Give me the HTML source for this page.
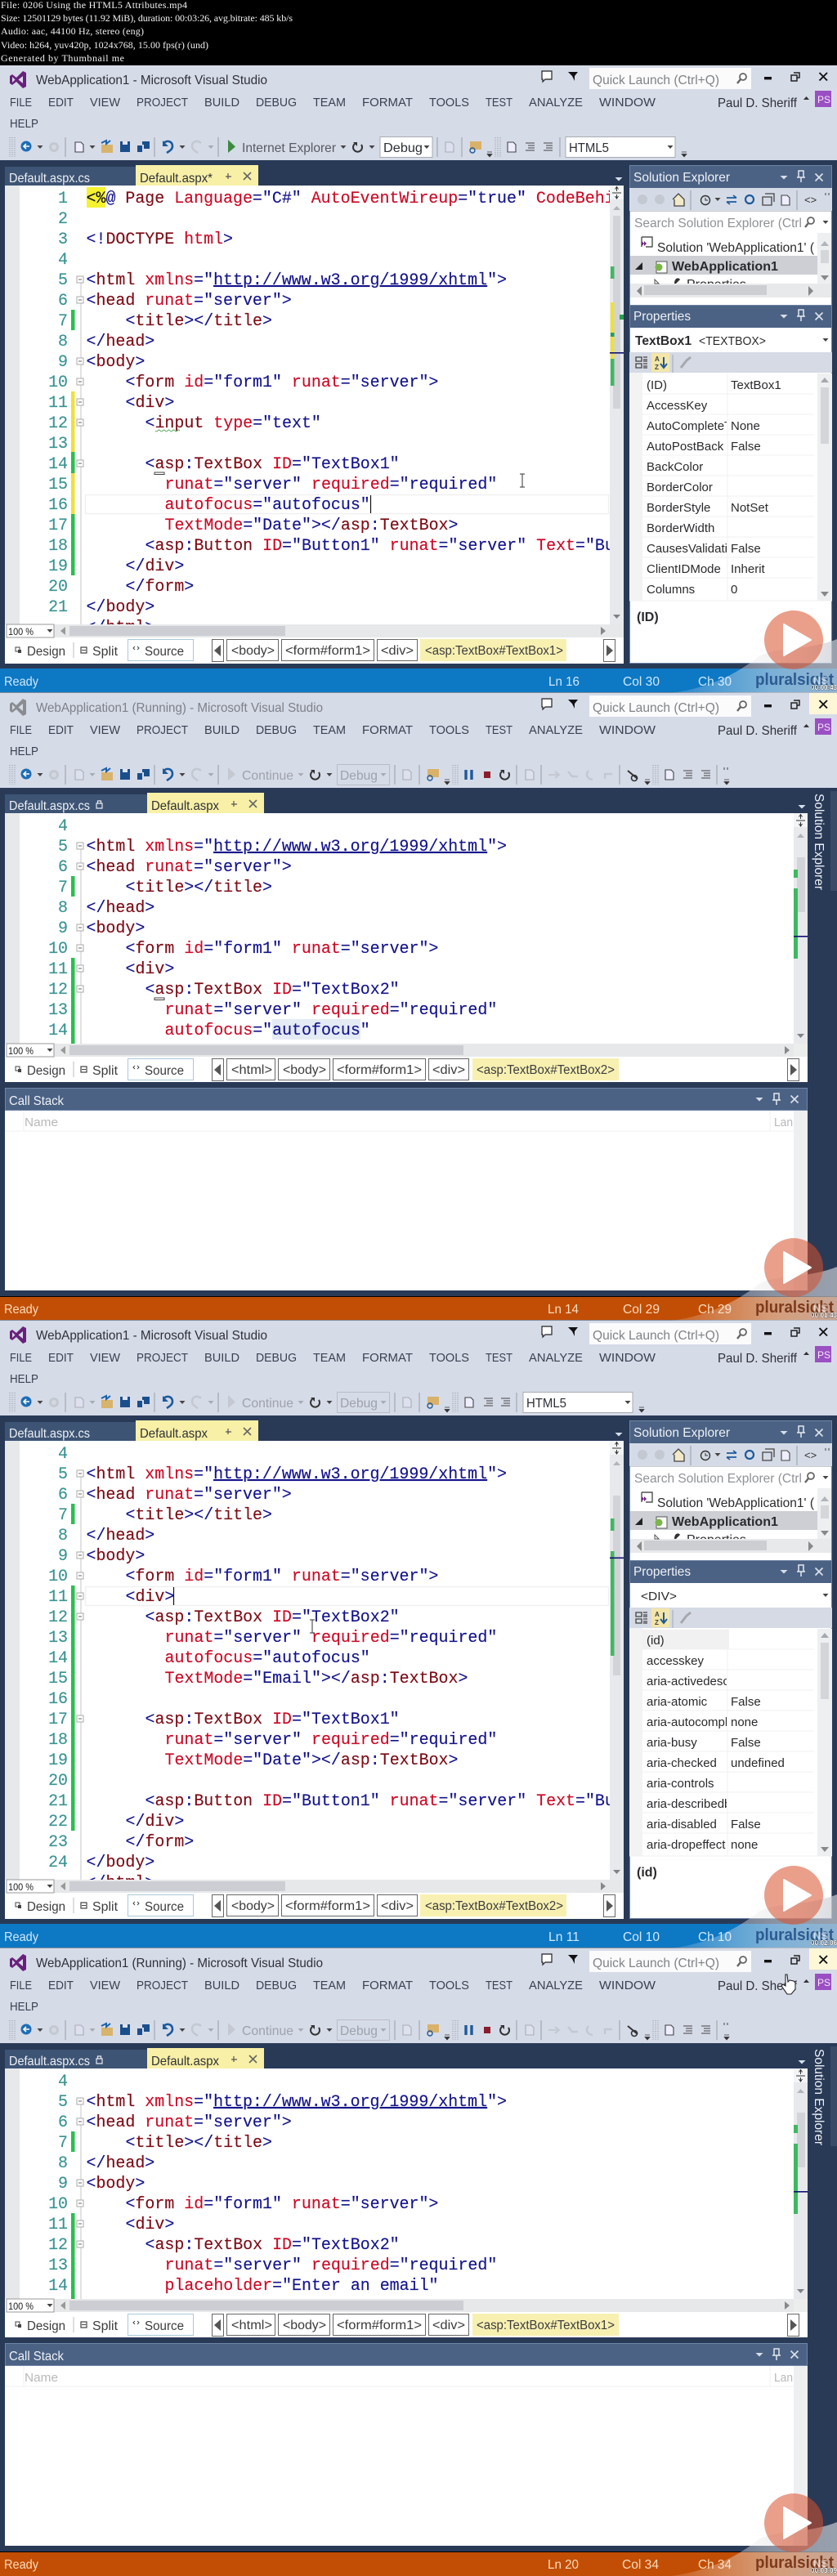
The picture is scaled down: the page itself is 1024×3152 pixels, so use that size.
<!DOCTYPE html>
<html><head><meta charset="utf-8"><title>0206 Using the HTML5 Attributes</title>
<style>
html,body{margin:0;padding:0;background:#000}
svg{display:block;filter:blur(.3px)}
text{white-space:pre;font-family:"Liberation Sans",sans-serif}
.h{font-family:"Liberation Serif",serif;font-size:12px;fill:#f2f2f2}
.c{font-family:"Liberation Mono",monospace;font-size:19.95px;fill:#14148c;stroke:#14148c;stroke-width:.15}
.m{fill:#7d0c16;stroke:#7d0c16}.r{fill:#cc0a26;stroke:#cc0a26}.u{text-decoration:underline}.k{fill:#111;stroke:#111}
.n{font-family:"Liberation Mono",monospace;font-size:19.95px;fill:#3a9492;text-anchor:end;stroke:#3a9492;stroke-width:.15}
.t{font-size:16px;fill:#2e3038}.ti{font-size:16px;fill:#7d8088}
.mn{font-size:15px;fill:#3a4150}
.g{font-size:16px;fill:#9da2ab}.d{font-size:16px;fill:#565a62}
.w{font-size:16px;fill:#eef1f6}
.p{font-size:15px;fill:#2a2a2e}
.b{font-size:15.5px;fill:#3c3c40}
.st{font-size:16px}
.ps{font-size:12px;fill:#f4e6fa}
.pl{font-size:20px;font-weight:700}
.z{font-size:12px;fill:#222}
.ns{font-size:13px;font-weight:700;fill:#fff;opacity:.55}
.ts{font-size:8px;font-weight:700;fill:#fff;stroke:#000;stroke-width:.5;paint-order:stroke}
</style></head><body>
<svg xmlns="http://www.w3.org/2000/svg" width="1024" height="3152" viewBox="0 0 1024 3152">
<defs>
<clipPath id="ec1"><rect x="100" y="147" width="646" height="537"/></clipPath>
<clipPath id="ec2"><rect x="100" y="147" width="871" height="282"/></clipPath>
<clipPath id="nm"><rect x="786" y="380" width="103" height="300"/></clipPath>
<clipPath id="sl"><rect x="770" y="204" width="230" height="63"/></clipPath>
<linearGradient id="sw" x1="0" y1="0" x2="1" y2="0"><stop offset="0" stop-color="#fff" stop-opacity=".1"/><stop offset=".6" stop-color="#e8e8ea" stop-opacity=".5"/><stop offset="1" stop-color="#c8ccd4" stop-opacity=".7"/></linearGradient>
<path id="cr" d="M-3.5-2H3.5L0 2Z" fill="#444"/>
<path id="crg" d="M-3.5-2H3.5L0 2Z" fill="#a7abb3"/>
<path id="crw" d="M-4.5-2H4.5L0 2.5Z" fill="#d6deea"/>
<g id="sp"><path d="M0 0V24" stroke="#a2a7b1" stroke-width="1.2"/></g>
<g id="fb"><rect x="94" y="-4" width="8" height="8" fill="#fff" stroke="#aaa"/><path d="M96 0H100" stroke="#666"/></g>
<g id="doc"><path d="M-5-6H2L5-3V6H-5Z" fill="#eef" stroke="#444" stroke-width="1.1"/></g>
<g id="lns"><path d="M-5-5H6M-2-2H6M-2 1H6M-5 4H6" stroke="#444" stroke-width="1.1"/></g>
<g id="gr"><path d="M0 0V24M3 0V24M6 0V24" stroke="#8c919b" stroke-dasharray="1 1.6"/></g>
<g id="dd"><path d="M-3-1H3M-3 1.5H3L0 5Z" fill="#333" stroke="#333" stroke-width=".7"/></g>
<g id="chrome">
<path d="M663 7H675V17H667L664 20V17H663Z" fill="#fff" stroke="#222" stroke-width="1.2"/>
<path d="M695 8H707L703 13V19L700 13Z" fill="#111"/>
<rect x="721" y="3" width="198" height="26" fill="#fbfbfc"/>
<circle cx="909" cy="14" r="4" fill="none" stroke="#666" stroke-width="1.8"/><path d="M906 17L902 22" stroke="#666" stroke-width="2.4"/>
<rect x="935" y="14" width="9" height="3.4" fill="#111"/>
<path d="M971 9H978V15H975M968 12H975V19H968Z" fill="none" stroke="#222" stroke-width="1.5"/>
<path d="M1002.5 9L1012 18.5M1012 9L1002.5 18.5" stroke="#111" stroke-width="1.9"/>
<path d="M983 42H990L986.5 38Z" fill="#333"/>
<rect x="997" y="31" width="20" height="20" fill="#9a4fc2"/>
</g>
<g id="tbl">
<g transform="translate(12,88)"><use href="#gr"/></g>
<circle cx="32" cy="99" r="6.5" fill="#1d6db4"/><path d="M36 99H29M32 96L29 99L32 102" stroke="#fff" stroke-width="1.6" fill="none"/>
<use href="#cr" x="49" y="100"/><circle cx="66" cy="100" r="6" fill="#c3c8d1"/><circle cx="66" cy="100" r="3" fill="#d4d8e0"/>
<use href="#sp" x="80" y="88"/>
<rect x="124" y="97" width="14" height="10" fill="#d8b36c"/><path d="M124 95L130 92V96L135 92" stroke="#1d62a8" stroke-width="2" fill="none"/>
<path d="M147 93H159V106H147Z" fill="#1b4f8c"/><rect x="150" y="93" width="6" height="4" fill="#dfe4ee"/>
<path d="M168 98H174V106H168ZM174 93H183V102H176V97H174Z" fill="#1b4f8c"/>
<use href="#sp" x="189" y="88"/>
<path d="M200 95C205 91 211 93 211 99C211 103 207 105 204 107" fill="none" stroke="#1b5a9c" stroke-width="2.6"/><path d="M199 92V99H206Z" fill="#1b5a9c"/>
<use href="#cr" x="223" y="100"/>
<path d="M246 95C241 91 235 93 235 99C235 103 239 105 242 107" fill="none" stroke="#c3c8d1" stroke-width="2.6"/>
<use href="#crg" x="258" y="100"/><use href="#sp" x="267" y="88"/>
</g>
<g id="ref"><path d="M-4-4A5.5 5.5 0 1 0 4-3" fill="none" stroke="#333" stroke-width="2"/><path d="M-6-6H-1V-1Z" fill="#333"/></g>
<g id="pin"><path d="M-3-7H3V1H-3ZM-5 1H5M0 1V7" fill="none" stroke="#e4e8f0" stroke-width="1.5"/></g>
<g id="xw"><path d="M-4.5-4.5L4.5 4.5M4.5-4.5L-4.5 4.5" stroke="#dde3ec" stroke-width="1.6"/></g>
<g id="setb">
<rect x="770" y="150" width="248" height="28" fill="#d5dbe6"/>
<circle cx="786" cy="164" r="6" fill="#c3c8d1"/><circle cx="807" cy="164" r="6" fill="#c3c8d1"/>
<path d="M823 164L830 157L837 164V172H825V164" fill="#f2e9c8" stroke="#444" stroke-width="1.3"/>
<use href="#sp" x="845" y="153" transform="translate(0,0)"/>
<circle cx="863" cy="165" r="5.5" fill="none" stroke="#333" stroke-width="1.4"/><path d="M863 162V165H866" stroke="#333" fill="none"/><use href="#cr" x="878" y="164"/>
<path d="M889 162H901M897 159L901 162M889 167H901M893 170L889 167" stroke="#1f5a9a" stroke-width="1.7" fill="none"/>
<circle cx="917" cy="164" r="5" fill="none" stroke="#1f5a9a" stroke-width="2.2"/>
<path d="M933 161H944V171H933ZM936 157H947V167" fill="none" stroke="#444" stroke-width="1.3"/>
<use href="#doc" x="961" y="165"/><use href="#sp" x="975" y="153"/>
<text x="984" y="169" font-size="13" fill="#333">&lt;&gt;</text>
<path d="M1010 156V159M1014 156V159" stroke="#444"/>
</g>
<g id="prtb">
<rect x="770" y="351" width="248" height="25" fill="#d5dae4"/>
<path d="M778 357H785V362H778ZM778 365H785V370H778ZM787 357H792M787 360H792M787 362H792M787 365H792M787 368H792M787 370H792" fill="none" stroke="#444" stroke-width="1.3"/>
<rect x="797" y="352" width="22" height="23" fill="#f3e6a8"/>
<text x="801" y="362" font-size="8" font-weight="700" fill="#444">A</text><text x="801" y="372" font-size="8" font-weight="700" fill="#444">Z</text>
<path d="M812 357V369M808 365L812 370L816 365" fill="none" stroke="#1f5a9a" stroke-width="2"/>
<path d="M823 354V376" stroke="#a2a7b1"/>
<path d="M833 370L840 361L845 357" stroke="#a5a8ad" stroke-width="3"/>
</g>
<g id="dtab">
<rect x="19" y="712" width="5" height="5" fill="none" stroke="#444"/><rect x="22" y="715" width="4" height="4" fill="#444"/>
<path d="M90 706V725" stroke="#b8bcc4"/>
<rect x="99" y="712" width="7" height="7" fill="none" stroke="#444" stroke-width="1.2"/><path d="M100 715.5H105" stroke="#444"/>
<rect x="156.5" y="702.5" width="80" height="26" fill="#fff" stroke="#a9c9d8"/>
<path d="M165 711L163 713L165 715M168 711L170 713L168 715" stroke="#444" fill="none"/>
<rect x="259.5" y="702.5" width="14" height="27" fill="#fff" stroke="#666"/><path d="M270 709V723L262 716Z" fill="#555"/>
</g>
<g id="sb1">
<rect x="746" y="147" width="17" height="537" fill="#e8e9ec"/>
<rect x="746" y="147" width="17" height="17" fill="#f3f4f6"/>
<path d="M749 156H760M754.5 149V154M752.5 151.5L754.5 148.5L756.5 151.5M754.5 158V163M752.5 160L754.5 163L756.5 160" stroke="#333" stroke-width="1" fill="none"/>
<path d="M750 177H759L754.5 172Z" fill="#b1b4ba"/><path d="M750 672H759L754.5 677Z" fill="#7f8288"/>
</g>
<g id="sb2">
<rect x="971" y="147" width="17" height="282" fill="#e8e9ec"/>
<rect x="971" y="147" width="17" height="17" fill="#f3f4f6"/>
<path d="M974 156H985M979.5 149V154M977.5 151.5L979.5 148.5L981.5 151.5M979.5 158V163M977.5 160L979.5 163L981.5 160" stroke="#333" stroke-width="1" fill="none"/>
<path d="M975 177H984L979.5 172Z" fill="#b1b4ba"/><path d="M975 417H984L979.5 422Z" fill="#7f8288"/>
<rect x="975" y="201" width="10" height="67" fill="#d2d4d9"/>
<rect x="971" y="216" width="5" height="10" fill="#3fb862"/><rect x="971" y="239" width="5" height="86" fill="#3fb862"/><rect x="971" y="297" width="17" height="1.6" fill="#101070"/>
</g>
<g id="dk2">
<rect x="0" y="116" width="1024" height="622" fill="#293a57"/>
<rect x="6" y="147" width="982" height="329" fill="#fff"/>
<rect x="6" y="147" width="18" height="282" fill="#e7e8ea"/>
<rect x="66" y="429" width="905" height="16" fill="#e7e8ea"/><rect x="85" y="431" width="482" height="12" fill="#cdced3"/>
<path d="M80 432V442L74 437Z" fill="#999"/><path d="M960 432V442L966 437Z" fill="#888"/>
<rect x="971" y="429" width="17" height="16" fill="#eceded"/>
<rect x="8" y="429" width="58" height="16" fill="#fff" stroke="#999"/>
<use href="#cr" x="61" y="437"/>
<rect x="6" y="483" width="982" height="28" fill="#4b6284"/><rect x="6.5" y="483.5" width="981" height="27" fill="none" stroke="#6f85a6"/>
<rect x="6" y="511" width="982" height="220" fill="#fff"/>
<rect x="971" y="511" width="17" height="220" fill="#eeeff1"/>
<path d="M6 536H971" stroke="#f0f0f1"/><path d="M29 511V536M942 511V536" stroke="#f1f1f2"/>
<use href="#crw" x="929" y="497"/><use href="#pin" x="950" y="497"/><use href="#xw" x="972" y="497"/>
<rect x="1016" y="120" width="8" height="122" fill="#3a4b68"/>
<use href="#crw" x="981" y="139"/>
</g>
<g id="dk1">
<rect x="0" y="116" width="1024" height="622" fill="#293a57"/>
<rect x="6" y="147" width="757" height="585" fill="#fff"/>
<rect x="6" y="147" width="18" height="537" fill="#e7e8ea"/>
<rect x="66" y="684" width="697" height="16" fill="#e7e8ea"/><rect x="85" y="686" width="264" height="12" fill="#cdced3"/>
<path d="M80 687V697L74 692Z" fill="#999"/><path d="M735 687V697L741 692Z" fill="#888"/>
<rect x="8" y="684" width="58" height="16" fill="#fff" stroke="#999"/><use href="#cr" x="61" y="692"/>
<use href="#crw" x="757" y="139"/>
<use href="#sb1"/>
<rect x="770" y="122" width="248" height="243" fill="#fff"/><rect x="770" y="122" width="248" height="28" fill="#4b6284"/><rect x="770.5" y="122.5" width="247" height="242" fill="none" stroke="#6f85a6"/>
<use href="#setb"/>
<rect x="771" y="178" width="246" height="1" fill="#ccc"/>
<use href="#crw" x="959" y="137"/><use href="#pin" x="980" y="136"/><use href="#xw" x="1002" y="137"/>
<circle cx="992" cy="190" r="4" fill="none" stroke="#666" stroke-width="1.8"/><path d="M989 193L985 198" stroke="#666" stroke-width="2.4"/><use href="#cr" x="1010" y="192"/>
<rect x="771" y="233" width="229" height="23" fill="#cdcfd4"/>
<rect x="1000" y="205" width="17" height="62" fill="#eeeff1"/><path d="M1004 221H1014L1009 215Z" fill="#b1b4ba"/><rect x="1004" y="226" width="10" height="16" fill="#d4d6da"/><path d="M1004 257H1014L1009 263Z" fill="#888"/>
<rect x="771" y="267" width="246" height="17" fill="#e8e9eb"/><rect x="788" y="269" width="150" height="12" fill="#cdced2"/><path d="M785 270V282L779 276Z" fill="#888"/><path d="M989 270V282L995 276Z" fill="#888"/>
<path d="M785 210H798V222H790M785 210V222" fill="none" stroke="#333" stroke-width="1.2"/><path d="M785 215L788 218L785 221ZM788 215L791 218L788 221" fill="#68217a"/>
<path d="M782 245L786 241V250H777Z" fill="#222"/>
<path d="M803 240H816V254H803Z" fill="#fff" stroke="#555"/><circle cx="806" cy="247" r="4.5" fill="#7bb648"/>
<path d="M801 262L806 267H801Z" fill="none" stroke="#555"/><path d="M825 267C825 260 830 259 832 262L827 267Z" fill="#333"/>
<rect x="770" y="293" width="248" height="439" fill="#fff"/><rect x="770" y="293" width="248" height="28" fill="#4b6284"/><rect x="770.5" y="293.5" width="247" height="438" fill="none" stroke="#6f85a6"/>
<use href="#prtb"/>
<use href="#crw" x="959" y="307"/><use href="#pin" x="980" y="306"/><use href="#xw" x="1002" y="307"/>
<use href="#cr" x="1010" y="336"/>
<rect x="770" y="376" width="16" height="279" fill="#f3f3f4"/>
<path d="M890 377V655" stroke="#f1f1f2"/>
<path d="M786 402H996M786 427H996M786 452H996M786 477H996M786 502H996M786 527H996M786 552H996M786 577H996M786 602H996M786 627H996M770 655H1018" stroke="#f1f1f2"/>
<rect x="1000" y="377" width="18" height="278" fill="#eeeff1"/><path d="M1004 388H1014L1009 382Z" fill="#a5a8ad"/><rect x="1004" y="394" width="10" height="69" fill="#d3d5d9"/><path d="M1004 644H1014L1009 650Z" fill="#888"/>
</g>
<path id="swp" d="M820 768C870 762 905 742 930 722C950 712 990 716 1024 702V768Z" fill="url(#sw)"/>
<g id="vs"><path fill-rule="evenodd" d="M12 13L15 11L20 15L28 7L32 9V26L28 28L20 20L15 24L12 22ZM15 14V21L18.5 17.5ZM22.5 17.5L28 22V13Z"/></g>
</defs>

<rect width="1024" height="80" fill="#000"/>
<text class="h" x="1" y="10" textLength="228" lengthAdjust="spacing">File: 0206 Using the HTML5 Attributes.mp4</text>
<text class="h" x="1" y="26" textLength="357" lengthAdjust="spacing">Size: 12501129 bytes (11.92 MiB), duration: 00:03:26, avg.bitrate: 485 kb/s</text>
<text class="h" x="1" y="42" textLength="175" lengthAdjust="spacing">Audio: aac, 44100 Hz, stereo (eng)</text>
<text class="h" x="1" y="59" textLength="254" lengthAdjust="spacing">Video: h264, yuv420p, 1024x768, 15.00 fps(r) (und)</text>
<text class="h" x="1" y="75" textLength="151" lengthAdjust="spacing">Generated by Thumbnail me</text>

<!-- FRAME 1 -->
<g transform="translate(0,80)">
<rect width="1024" height="116" fill="#d6dbe8"/>
<use href="#vs" fill="#68217a"/><use href="#chrome"/>
<text class="t" x="44" y="23" textLength="283" lengthAdjust="spacingAndGlyphs">WebApplication1 - Microsoft Visual Studio</text>
<text class="g" x="725" y="23" textLength="155" lengthAdjust="spacingAndGlyphs" style="fill:#808388">Quick Launch (Ctrl+Q)</text>
<text class="ps" x="1000" y="46">PS</text>
<text class="mn" x="12" y="50" textLength="27" lengthAdjust="spacingAndGlyphs">FILE</text><text class="mn" x="59" y="50" textLength="31" lengthAdjust="spacingAndGlyphs">EDIT</text><text class="mn" x="110" y="50" textLength="37" lengthAdjust="spacingAndGlyphs">VIEW</text><text class="mn" x="167" y="50" textLength="63" lengthAdjust="spacingAndGlyphs">PROJECT</text><text class="mn" x="250" y="50" textLength="43" lengthAdjust="spacingAndGlyphs">BUILD</text><text class="mn" x="313" y="50" textLength="50" lengthAdjust="spacingAndGlyphs">DEBUG</text><text class="mn" x="383" y="50" textLength="40" lengthAdjust="spacingAndGlyphs">TEAM</text><text class="mn" x="443" y="50" textLength="62" lengthAdjust="spacingAndGlyphs">FORMAT</text><text class="mn" x="525" y="50" textLength="49" lengthAdjust="spacingAndGlyphs">TOOLS</text><text class="mn" x="594" y="50" textLength="33" lengthAdjust="spacingAndGlyphs">TEST</text><text class="mn" x="647" y="50" textLength="66" lengthAdjust="spacingAndGlyphs">ANALYZE</text><text class="mn" x="733" y="50" textLength="69" lengthAdjust="spacingAndGlyphs">WINDOW</text>
<text class="mn" x="878" y="51" textLength="97" lengthAdjust="spacingAndGlyphs" style="fill:#2e3038;font-size:16px">Paul D. Sheriff</text>
<text class="mn" x="12" y="76" textLength="35" lengthAdjust="spacingAndGlyphs">HELP</text>
<use href="#tbl"/>
<use href="#doc" x="97" y="100"/><use href="#cr" x="113" y="100"/>
<path d="M279 91L288 99.5L279 107Z" fill="#3b8a3e"/>
<text class="d" x="296" y="106" textLength="115" lengthAdjust="spacingAndGlyphs">Internet Explorer</text>
<use href="#cr" x="420" y="100"/><use href="#ref" x="438" y="100"/><use href="#cr" x="455" y="100"/>
<rect x="465" y="87.5" width="64" height="25" fill="#fff" stroke="#a8abb2"/><text class="t" x="469" y="106" textLength="48" lengthAdjust="spacingAndGlyphs">Debug</text><use href="#cr" x="522" y="100"/>
<use href="#sp" x="535" y="88"/><use href="#doc" x="550" y="100" opacity=".3"/><use href="#sp" x="565" y="88"/>
<rect x="575" y="93" width="14" height="10" fill="#d9b26a"/><circle cx="578" cy="104" r="3" fill="none" stroke="#1f5a9a" stroke-width="1.4"/>
<use href="#dd" x="599" y="107"/><g transform="translate(606,88)"><use href="#gr"/></g>
<use href="#doc" x="626" y="100"/><use href="#lns" x="648" y="100"/><use href="#lns" x="670" y="100"/><use href="#sp" x="685" y="88"/>
<rect x="692" y="87.5" width="134" height="25" fill="#fff" stroke="#a8abb2"/><text class="t" x="696" y="106" textLength="49" lengthAdjust="spacingAndGlyphs">HTML5</text><use href="#cr" x="820" y="100"/><use href="#dd" x="837" y="107"/>
<use href="#dk1"/>
<text class="z" x="10" y="697" textLength="31" lengthAdjust="spacingAndGlyphs">100 %</text>
<rect x="6" y="124" width="160" height="23" fill="#3e5474"/>
<text class="w" x="11" y="143" textLength="99" lengthAdjust="spacingAndGlyphs">Default.aspx.cs</text>
<rect x="166" y="122" width="150" height="25" fill="#f8f0a6"/>
<text class="t" x="171" y="143" textLength="89" lengthAdjust="spacingAndGlyphs">Default.aspx*</text>
<path d="M276 136H283M279 132V139" stroke="#555" stroke-width="1.2"/><path d="M298 131L307 140M307 131L298 140" stroke="#666" stroke-width="1.6"/>
<rect x="87" y="299" width="4.5" height="25" fill="#27c04d"/><rect x="87" y="399" width="4.5" height="74" fill="#efe03a"/><rect x="87" y="473" width="4.5" height="26" fill="#27c04d"/><rect x="87" y="499" width="4.5" height="50" fill="#efe03a"/><rect x="87" y="549" width="4.5" height="75" fill="#27c04d"/>
<path d="M99 262V684" stroke="#c4c4c4"/>
<use href="#fb" y="262"/><use href="#fb" y="287"/><use href="#fb" y="362"/><use href="#fb" y="387"/><use href="#fb" y="412"/><use href="#fb" y="437"/><use href="#fb" y="487"/>
<rect x="104.5" y="525.5" width="640" height="23" fill="none" stroke="#f0f0f0" stroke-width="1.4"/>
<rect x="106" y="149" width="23" height="25" fill="#f5f230"/>
<text class="n" x="83" y="168">1</text><text class="n" x="83" y="193">2</text><text class="n" x="83" y="218">3</text><text class="n" x="83" y="243">4</text><text class="n" x="83" y="268">5</text><text class="n" x="83" y="293">6</text><text class="n" x="83" y="318">7</text><text class="n" x="83" y="343">8</text><text class="n" x="83" y="368">9</text><text class="n" x="83" y="393">10</text><text class="n" x="83" y="418">11</text><text class="n" x="83" y="443">12</text><text class="n" x="83" y="468">13</text><text class="n" x="83" y="493">14</text><text class="n" x="83" y="518">15</text><text class="n" x="83" y="543">16</text><text class="n" x="83" y="568">17</text><text class="n" x="83" y="593">18</text><text class="n" x="83" y="618">19</text><text class="n" x="83" y="643">20</text><text class="n" x="83" y="668">21</text>
<g clip-path="url(#ec1)">
<text class="c" x="105.5" y="168"><tspan class="k">&lt;%</tspan>@ <tspan class="m">Page</tspan> <tspan class="r">Language</tspan>="C#" <tspan class="r">AutoEventWireup</tspan>="true" <tspan class="r">CodeBehind</tspan></text>
<text class="c" x="105.5" y="218">&lt;!<tspan class="m">DOCTYPE</tspan> <tspan class="r">html</tspan>&gt;</text>
<text class="c" x="105.5" y="268">&lt;<tspan class="m">html</tspan> <tspan class="r">xmlns</tspan>="<tspan class="u">http://www.w3.org/1999/xhtml</tspan>"&gt;</text>
<text class="c" x="105.5" y="293">&lt;<tspan class="m">head</tspan> <tspan class="r">runat</tspan>="server"&gt;</text>
<text class="c" x="153.5" y="318">&lt;<tspan class="m">title</tspan>&gt;&lt;/<tspan class="m">title</tspan>&gt;</text>
<text class="c" x="105.5" y="343">&lt;/<tspan class="m">head</tspan>&gt;</text>
<text class="c" x="105.5" y="368">&lt;<tspan class="m">body</tspan>&gt;</text>
<text class="c" x="153.5" y="393">&lt;<tspan class="m">form</tspan> <tspan class="r">id</tspan>="form1" <tspan class="r">runat</tspan>="server"&gt;</text>
<text class="c" x="153.5" y="418">&lt;<tspan class="m">div</tspan>&gt;</text>
<text class="c" x="177.5" y="443">&lt;<tspan class="m">input</tspan> <tspan class="r">type</tspan>="text"</text>
<text class="c" x="177.5" y="493">&lt;<tspan class="m">asp</tspan>:<tspan class="m">TextBox</tspan> <tspan class="r">ID</tspan>="TextBox1"</text>
<text class="c" x="201.5" y="518"><tspan class="r">runat</tspan>="server" <tspan class="r">required</tspan>="required"</text>
<text class="c" x="201.5" y="543"><tspan class="r">autofocus</tspan>="autofocus"</text>
<text class="c" x="201.5" y="568"><tspan class="r">TextMode</tspan>="Date"&gt;&lt;/<tspan class="m">asp</tspan>:<tspan class="m">TextBox</tspan>&gt;</text>
<text class="c" x="177.5" y="593">&lt;<tspan class="m">asp</tspan>:<tspan class="m">Button</tspan> <tspan class="r">ID</tspan>="Button1" <tspan class="r">runat</tspan>="server" <tspan class="r">Text</tspan>="Button"</text>
<text class="c" x="153.5" y="618">&lt;/<tspan class="m">div</tspan>&gt;</text>
<text class="c" x="153.5" y="643">&lt;/<tspan class="m">form</tspan>&gt;</text>
<text class="c" x="105.5" y="668">&lt;/<tspan class="m">body</tspan>&gt;</text>
<text class="c" x="105.5" y="693">&lt;/<tspan class="m">html</tspan>&gt;</text>
</g>
<path d="M190 447q1.5 2 3 0t3 0t3 0t3 0t3 0t3 0t3 0t3 0t3 0t3 0" fill="none" stroke="#58a65c"/>
<rect x="189" y="498" width="12" height="2.5" fill="#fff" stroke="#444"/>
<path d="M453.5 526V548" stroke="#111" stroke-width="1.2"/>
<path d="M636 500H642M636 516H642M639 500V516" stroke="#333"/>
<rect x="750" y="184" width="9" height="236" fill="#d1d3d8"/><rect x="747" y="246" width="4.5" height="15" fill="#3fb862"/><rect x="747" y="290" width="4.5" height="69" fill="#efe03a"/><rect x="758" y="305" width="5" height="6" fill="#27a04d"/><rect x="747" y="327" width="4.5" height="5" fill="#27a04d"/><rect x="747" y="359" width="4.5" height="33" fill="#3fb862"/><rect x="746" y="351" width="17" height="1.6" fill="#101070"/>
<use href="#dtab"/>
<text class="b" x="33" y="722" textLength="47" lengthAdjust="spacingAndGlyphs">Design</text><text class="b" x="113" y="722" textLength="31" lengthAdjust="spacingAndGlyphs">Split</text><text class="b" x="177" y="722" textLength="48" lengthAdjust="spacingAndGlyphs">Source</text>
<rect x="277.5" y="702.5" width="63" height="26" fill="#fff" stroke="#666"/><text class="b" x="283" y="721" textLength="53" lengthAdjust="spacingAndGlyphs">&lt;body&gt;</text>
<rect x="344.5" y="702.5" width="113" height="26" fill="#fff" stroke="#666"/><text class="b" x="349" y="721" textLength="104" lengthAdjust="spacingAndGlyphs">&lt;form#form1&gt;</text>
<rect x="461.5" y="702.5" width="49" height="26" fill="#fff" stroke="#666"/><text class="b" x="466" y="721" textLength="40" lengthAdjust="spacingAndGlyphs">&lt;div&gt;</text>
<rect x="514" y="702" width="179" height="27" fill="#f8f0b0"/><text class="b" x="520" y="721" textLength="169" lengthAdjust="spacingAndGlyphs">&lt;asp:TextBox#TextBox1&gt;</text>
<rect x="738.5" y="702.5" width="14" height="27" fill="#fff" stroke="#666"/><path d="M742 709V723L750 716Z" fill="#555"/>
<text class="w" x="775" y="142" textLength="118" lengthAdjust="spacingAndGlyphs">Solution Explorer</text>
<text class="g" x="776" y="198" textLength="205" lengthAdjust="spacingAndGlyphs" style="fill:#8f9297">Search Solution Explorer (Ctrl</text>
<g clip-path="url(#sl)"><text class="p" x="804" y="228" textLength="192" lengthAdjust="spacingAndGlyphs" style="font-size:16px">Solution 'WebApplication1' (</text>
<text class="p" x="822" y="251" textLength="130" lengthAdjust="spacingAndGlyphs" style="font-size:16px;font-weight:700">WebApplication1</text>
<text class="p" x="840" y="273" style="font-size:16px">Properties</text></g>
<text class="w" x="775" y="312" textLength="70" lengthAdjust="spacingAndGlyphs">Properties</text>
<text class="p" x="777" y="342" textLength="69" lengthAdjust="spacingAndGlyphs" style="font-weight:700;font-size:16px">TextBox1</text><text class="p" x="855" y="342" textLength="82" lengthAdjust="spacingAndGlyphs" style="font-size:15px">&lt;TEXTBOX&gt;</text>
<g clip-path="url(#nm)">
<text class="p" x="791" y="396">(ID)</text><text class="p" x="791" y="421">AccessKey</text><text class="p" x="791" y="446">AutoCompleteType</text><text class="p" x="791" y="471">AutoPostBack</text><text class="p" x="791" y="496">BackColor</text><text class="p" x="791" y="521">BorderColor</text><text class="p" x="791" y="546">BorderStyle</text><text class="p" x="791" y="571">BorderWidth</text><text class="p" x="791" y="596">CausesValidation</text><text class="p" x="791" y="621">ClientIDMode</text><text class="p" x="791" y="646">Columns</text>
</g>
<text class="p" x="894" y="396">TextBox1</text><text class="p" x="894" y="446">None</text><text class="p" x="894" y="471">False</text><text class="p" x="894" y="546">NotSet</text><text class="p" x="894" y="596">False</text><text class="p" x="894" y="621">Inherit</text><text class="p" x="894" y="646">0</text>
<text class="p" x="779" y="680" style="font-weight:700;font-size:16px">(ID)</text>
<rect x="0" y="738" width="1024" height="29" fill="#0d78c4"/><rect x="0" y="767" width="1024" height="1" fill="#7f8b99"/>
<text class="st" x="5" y="759" fill="#cfe8f8" textLength="42" lengthAdjust="spacingAndGlyphs">Ready</text><text class="st" x="671" y="759" fill="#cfe8f8" textLength="38" lengthAdjust="spacingAndGlyphs">Ln 16</text><text class="st" x="762" y="759" fill="#cfe8f8" textLength="45" lengthAdjust="spacingAndGlyphs">Col 30</text><text class="st" x="854" y="759" fill="#cfe8f8" textLength="41" lengthAdjust="spacingAndGlyphs">Ch 30</text>
<use href="#swp"/>
<circle cx="971" cy="703" r="36" fill="#d8502c" opacity=".55"/><path d="M959 684L992 703L959 722Z" fill="#fff" stroke="#fff" stroke-width="2" stroke-linejoin="round"/>
<text class="pl" x="924" y="758" fill="#2d5a90" textLength="96" lengthAdjust="spacingAndGlyphs">pluralsight</text>
<text class="ns" x="995" y="757">NS</text>
<text class="ts" x="992" y="764">00:00:43</text>
</g>

<!-- FRAME 2 -->
<g transform="translate(0,848)">
<rect width="1024" height="116" fill="#d6dbe8"/>
<use href="#vs" fill="#8a8c90"/>
<rect x="990" y="0" width="34" height="26" fill="#fdf7d8"/>
<use href="#chrome"/>
<text class="ti" x="44" y="23" textLength="351" lengthAdjust="spacingAndGlyphs">WebApplication1 (Running) - Microsoft Visual Studio</text>
<text class="g" x="725" y="23" textLength="155" lengthAdjust="spacingAndGlyphs" style="fill:#808388">Quick Launch (Ctrl+Q)</text>
<text class="ps" x="1000" y="46">PS</text>
<text class="mn" x="12" y="50" textLength="27" lengthAdjust="spacingAndGlyphs">FILE</text><text class="mn" x="59" y="50" textLength="31" lengthAdjust="spacingAndGlyphs">EDIT</text><text class="mn" x="110" y="50" textLength="37" lengthAdjust="spacingAndGlyphs">VIEW</text><text class="mn" x="167" y="50" textLength="63" lengthAdjust="spacingAndGlyphs">PROJECT</text><text class="mn" x="250" y="50" textLength="43" lengthAdjust="spacingAndGlyphs">BUILD</text><text class="mn" x="313" y="50" textLength="50" lengthAdjust="spacingAndGlyphs">DEBUG</text><text class="mn" x="383" y="50" textLength="40" lengthAdjust="spacingAndGlyphs">TEAM</text><text class="mn" x="443" y="50" textLength="62" lengthAdjust="spacingAndGlyphs">FORMAT</text><text class="mn" x="525" y="50" textLength="49" lengthAdjust="spacingAndGlyphs">TOOLS</text><text class="mn" x="594" y="50" textLength="33" lengthAdjust="spacingAndGlyphs">TEST</text><text class="mn" x="647" y="50" textLength="66" lengthAdjust="spacingAndGlyphs">ANALYZE</text><text class="mn" x="733" y="50" textLength="69" lengthAdjust="spacingAndGlyphs">WINDOW</text>
<text class="mn" x="878" y="51" textLength="97" lengthAdjust="spacingAndGlyphs" style="fill:#2e3038;font-size:16px">Paul D. Sheriff</text>
<text class="mn" x="12" y="76" textLength="35" lengthAdjust="spacingAndGlyphs">HELP</text>
<use href="#tbl"/>
<use href="#doc" x="97" y="100" opacity=".3"/><use href="#crg" x="113" y="100"/>
<path d="M279 91L288 99.5L279 107Z" fill="#c3c8d1"/>
<text class="g" x="296" y="106" textLength="63" lengthAdjust="spacingAndGlyphs">Continue</text>
<use href="#crg" x="368" y="100"/><use href="#ref" x="386" y="100"/><use href="#cr" x="403" y="100"/>
<rect x="412.5" y="87.5" width="64" height="25" fill="none" stroke="#b8bdc6"/><text class="g" x="416" y="106" textLength="46" lengthAdjust="spacingAndGlyphs">Debug</text><use href="#crg" x="469" y="100"/>
<use href="#sp" x="483" y="88"/><use href="#doc" x="498" y="100" opacity=".3"/><use href="#sp" x="513" y="88"/>
<rect x="523" y="93" width="14" height="10" fill="#d9b26a"/><circle cx="526" cy="104" r="3" fill="none" stroke="#1f5a9a" stroke-width="1.4"/>
<use href="#dd" x="547" y="107"/><g transform="translate(554,88)"><use href="#gr"/></g>
<path d="M570 94V106M577 94V106" stroke="#1f5a9a" stroke-width="3.4"/><rect x="592" y="96" width="8" height="8" fill="#8c1c2c"/><use href="#ref" x="618" y="100"/><use href="#sp" x="632" y="88"/>
<use href="#doc" x="648" y="100" opacity=".3"/><use href="#sp" x="662" y="88"/>
<path d="M671 100H683M679 96L684 100L679 104" stroke="#c3c8d1" stroke-width="2" fill="none"/><path d="M695 96L700 102H707" stroke="#c3c8d1" stroke-width="2.4" fill="none"/><path d="M720 95C716 100 718 105 725 106" stroke="#c3c8d1" stroke-width="2.4" fill="none"/><path d="M740 105V99H749" stroke="#c3c8d1" stroke-width="2.4" fill="none"/>
<use href="#sp" x="758" y="88"/><path d="M768 95L780 105" stroke="#333" stroke-width="2"/><circle cx="776" cy="104" r="3.5" fill="none" stroke="#333" stroke-width="1.6"/><use href="#dd" x="792" y="107"/><g transform="translate(799,88)"><use href="#gr"/></g>
<use href="#doc" x="819" y="100"/><use href="#lns" x="841" y="100"/><use href="#lns" x="863" y="100"/><use href="#sp" x="877" y="88"/><path d="M886 91V94M890 91V94" stroke="#444"/><use href="#dd" x="889" y="107"/>
<use href="#dk2"/>
<text class="z" x="10" y="442" textLength="31" lengthAdjust="spacingAndGlyphs">100 %</text>
<rect x="6" y="124" width="174" height="23" fill="#3e5474"/>
<text class="w" x="11" y="143" textLength="99" lengthAdjust="spacingAndGlyphs">Default.aspx.cs</text>
<path d="M118 135H125V141H118ZM119.5 135V132H123.5V135" fill="none" stroke="#e6e8ee" stroke-width="1.2"/>
<rect x="180" y="122" width="143" height="25" fill="#f8f0a6"/>
<text class="t" x="185" y="143" textLength="83" lengthAdjust="spacingAndGlyphs">Default.aspx</text>
<path d="M283 136H290M286 132V139" stroke="#555" stroke-width="1.2"/><path d="M305 131L314 140M314 131L305 140" stroke="#666" stroke-width="1.6"/>
<rect x="87" y="224" width="4.5" height="25" fill="#27c04d"/><rect x="87" y="324" width="4.5" height="105" fill="#27c04d"/>
<path d="M99 187V429" stroke="#c4c4c4"/>
<use href="#fb" y="187"/><use href="#fb" y="212"/><use href="#fb" y="287"/><use href="#fb" y="312"/><use href="#fb" y="337"/><use href="#fb" y="362"/>
<rect x="333" y="399" width="108" height="25" fill="#e4ebf4"/>
<text class="n" x="83" y="168">4</text><text class="n" x="83" y="193">5</text><text class="n" x="83" y="218">6</text><text class="n" x="83" y="243">7</text><text class="n" x="83" y="268">8</text><text class="n" x="83" y="293">9</text><text class="n" x="83" y="318">10</text><text class="n" x="83" y="343">11</text><text class="n" x="83" y="368">12</text><text class="n" x="83" y="393">13</text><text class="n" x="83" y="418">14</text>
<g clip-path="url(#ec2)">
<text class="c" x="105.5" y="193">&lt;<tspan class="m">html</tspan> <tspan class="r">xmlns</tspan>="<tspan class="u">http://www.w3.org/1999/xhtml</tspan>"&gt;</text>
<text class="c" x="105.5" y="218">&lt;<tspan class="m">head</tspan> <tspan class="r">runat</tspan>="server"&gt;</text>
<text class="c" x="153.5" y="243">&lt;<tspan class="m">title</tspan>&gt;&lt;/<tspan class="m">title</tspan>&gt;</text>
<text class="c" x="105.5" y="268">&lt;/<tspan class="m">head</tspan>&gt;</text>
<text class="c" x="105.5" y="293">&lt;<tspan class="m">body</tspan>&gt;</text>
<text class="c" x="153.5" y="318">&lt;<tspan class="m">form</tspan> <tspan class="r">id</tspan>="form1" <tspan class="r">runat</tspan>="server"&gt;</text>
<text class="c" x="153.5" y="343">&lt;<tspan class="m">div</tspan>&gt;</text>
<text class="c" x="177.5" y="368">&lt;<tspan class="m">asp</tspan>:<tspan class="m">TextBox</tspan> <tspan class="r">ID</tspan>="TextBox2"</text>
<text class="c" x="201.5" y="393"><tspan class="r">runat</tspan>="server" <tspan class="r">required</tspan>="required"</text>
<text class="c" x="201.5" y="418"><tspan class="r">autofocus</tspan>="autofocus"</text>
</g>
<rect x="189" y="373" width="12" height="2.5" fill="#fff" stroke="#444"/>
<use href="#sb2"/>
<text class="w" x="0" y="0" transform="translate(997,123) rotate(90)" textLength="118" lengthAdjust="spacingAndGlyphs">Solution Explorer</text>
<g transform="translate(0,-255)"><use href="#dtab"/>
<text class="b" x="33" y="722" textLength="47" lengthAdjust="spacingAndGlyphs">Design</text><text class="b" x="113" y="722" textLength="31" lengthAdjust="spacingAndGlyphs">Split</text><text class="b" x="177" y="722" textLength="48" lengthAdjust="spacingAndGlyphs">Source</text>
<rect x="277.5" y="702.5" width="59" height="26" fill="#fff" stroke="#666"/><text class="b" x="283" y="721" textLength="50" lengthAdjust="spacingAndGlyphs">&lt;html&gt;</text>
<rect x="340.5" y="702.5" width="63" height="26" fill="#fff" stroke="#666"/><text class="b" x="346" y="721" textLength="53" lengthAdjust="spacingAndGlyphs">&lt;body&gt;</text>
<rect x="407.5" y="702.5" width="113" height="26" fill="#fff" stroke="#666"/><text class="b" x="412" y="721" textLength="104" lengthAdjust="spacingAndGlyphs">&lt;form#form1&gt;</text>
<rect x="524.5" y="702.5" width="49" height="26" fill="#fff" stroke="#666"/><text class="b" x="529" y="721" textLength="40" lengthAdjust="spacingAndGlyphs">&lt;div&gt;</text>
<rect x="578" y="702" width="179" height="27" fill="#f8f0b0"/><text class="b" x="583" y="721" textLength="169" lengthAdjust="spacingAndGlyphs">&lt;asp:TextBox#TextBox2&gt;</text>
<rect x="963.5" y="702.5" width="14" height="27" fill="#fff" stroke="#666"/><path d="M967 709V723L975 716Z" fill="#555"/>
</g>
<text class="w" x="11" y="504" textLength="67" lengthAdjust="spacingAndGlyphs">Call Stack</text>
<text class="p" x="30" y="530" style="fill:#b8b8bc" textLength="41" lengthAdjust="spacingAndGlyphs">Name</text><text class="p" x="947" y="530" style="fill:#b8b8bc" textLength="23" lengthAdjust="spacingAndGlyphs">Lan</text>
<rect x="0" y="739" width="1024" height="28" fill="#c24e05"/><rect x="0" y="767" width="1024" height="1" fill="#7f8b99"/>
<text class="st" x="5" y="759" fill="#f9dcbc" textLength="42" lengthAdjust="spacingAndGlyphs">Ready</text><text class="st" x="670" y="759" fill="#f9dcbc" textLength="38" lengthAdjust="spacingAndGlyphs">Ln 14</text><text class="st" x="762" y="759" fill="#f9dcbc" textLength="45" lengthAdjust="spacingAndGlyphs">Col 29</text><text class="st" x="854" y="759" fill="#f9dcbc" textLength="41" lengthAdjust="spacingAndGlyphs">Ch 29</text>
<use href="#swp"/>
<circle cx="971" cy="703" r="36" fill="#d8502c" opacity=".55"/><path d="M959 684L992 703L959 722Z" fill="#fff" stroke="#fff" stroke-width="2" stroke-linejoin="round"/>
<text class="pl" x="924" y="758" fill="#7c3a1c" textLength="96" lengthAdjust="spacingAndGlyphs">pluralsight</text>
<text class="ns" x="995" y="757">NS</text>
<text class="ts" x="992" y="764">00:01:43</text>
</g>

<!-- FRAME 3 -->
<g transform="translate(0,1616)">
<rect width="1024" height="116" fill="#d6dbe8"/>
<use href="#vs" fill="#68217a"/><use href="#chrome"/>
<text class="t" x="44" y="23" textLength="283" lengthAdjust="spacingAndGlyphs">WebApplication1 - Microsoft Visual Studio</text>
<text class="g" x="725" y="23" textLength="155" lengthAdjust="spacingAndGlyphs" style="fill:#808388">Quick Launch (Ctrl+Q)</text>
<text class="ps" x="1000" y="46">PS</text>
<text class="mn" x="12" y="50" textLength="27" lengthAdjust="spacingAndGlyphs">FILE</text><text class="mn" x="59" y="50" textLength="31" lengthAdjust="spacingAndGlyphs">EDIT</text><text class="mn" x="110" y="50" textLength="37" lengthAdjust="spacingAndGlyphs">VIEW</text><text class="mn" x="167" y="50" textLength="63" lengthAdjust="spacingAndGlyphs">PROJECT</text><text class="mn" x="250" y="50" textLength="43" lengthAdjust="spacingAndGlyphs">BUILD</text><text class="mn" x="313" y="50" textLength="50" lengthAdjust="spacingAndGlyphs">DEBUG</text><text class="mn" x="383" y="50" textLength="40" lengthAdjust="spacingAndGlyphs">TEAM</text><text class="mn" x="443" y="50" textLength="62" lengthAdjust="spacingAndGlyphs">FORMAT</text><text class="mn" x="525" y="50" textLength="49" lengthAdjust="spacingAndGlyphs">TOOLS</text><text class="mn" x="594" y="50" textLength="33" lengthAdjust="spacingAndGlyphs">TEST</text><text class="mn" x="647" y="50" textLength="66" lengthAdjust="spacingAndGlyphs">ANALYZE</text><text class="mn" x="733" y="50" textLength="69" lengthAdjust="spacingAndGlyphs">WINDOW</text>
<text class="mn" x="878" y="51" textLength="97" lengthAdjust="spacingAndGlyphs" style="fill:#2e3038;font-size:16px">Paul D. Sheriff</text>
<text class="mn" x="12" y="76" textLength="35" lengthAdjust="spacingAndGlyphs">HELP</text>
<use href="#tbl"/>
<use href="#doc" x="97" y="100" opacity=".3"/><use href="#crg" x="113" y="100"/>
<path d="M279 91L288 99.5L279 107Z" fill="#c3c8d1"/>
<text class="g" x="296" y="106" textLength="63" lengthAdjust="spacingAndGlyphs">Continue</text>
<use href="#crg" x="368" y="100"/><use href="#ref" x="386" y="100"/><use href="#cr" x="403" y="100"/>
<rect x="412.5" y="87.5" width="64" height="25" fill="none" stroke="#b8bdc6"/><text class="g" x="416" y="106" textLength="46" lengthAdjust="spacingAndGlyphs">Debug</text><use href="#crg" x="469" y="100"/>
<use href="#sp" x="483" y="88"/><use href="#doc" x="498" y="100" opacity=".3"/><use href="#sp" x="513" y="88"/>
<rect x="523" y="93" width="14" height="10" fill="#d9b26a"/><circle cx="526" cy="104" r="3" fill="none" stroke="#1f5a9a" stroke-width="1.4"/>
<use href="#dd" x="547" y="107"/><g transform="translate(554,88)"><use href="#gr"/></g>
<use href="#doc" x="574" y="100"/><use href="#lns" x="597" y="100"/><use href="#lns" x="618" y="100"/><use href="#sp" x="632" y="88"/>
<rect x="640" y="87.5" width="134" height="25" fill="#fff" stroke="#a8abb2"/><text class="t" x="644" y="106" textLength="49" lengthAdjust="spacingAndGlyphs">HTML5</text><use href="#cr" x="768" y="100"/><use href="#dd" x="785" y="107"/>
<use href="#dk1"/>
<text class="z" x="10" y="697" textLength="31" lengthAdjust="spacingAndGlyphs">100 %</text>
<rect x="6" y="124" width="174" height="23" fill="#3e5474"/>
<text class="w" x="11" y="143" textLength="99" lengthAdjust="spacingAndGlyphs">Default.aspx.cs</text>
<rect x="166" y="122" width="150" height="25" fill="#f8f0a6"/>
<text class="t" x="171" y="143" textLength="83" lengthAdjust="spacingAndGlyphs">Default.aspx</text>
<path d="M276 136H283M279 132V139" stroke="#555" stroke-width="1.2"/><path d="M298 131L307 140M307 131L298 140" stroke="#666" stroke-width="1.6"/>
<rect x="87" y="224" width="4.5" height="25" fill="#27c04d"/><rect x="87" y="324" width="4.5" height="300" fill="#27c04d"/>
<path d="M99 187V684" stroke="#c4c4c4"/>
<use href="#fb" y="187"/><use href="#fb" y="212"/><use href="#fb" y="287"/><use href="#fb" y="312"/><use href="#fb" y="337"/><use href="#fb" y="362"/><use href="#fb" y="487"/>
<rect x="104.5" y="325.5" width="640" height="23" fill="none" stroke="#f0f0f0" stroke-width="1.4"/>
<text class="n" x="83" y="168">4</text><text class="n" x="83" y="193">5</text><text class="n" x="83" y="218">6</text><text class="n" x="83" y="243">7</text><text class="n" x="83" y="268">8</text><text class="n" x="83" y="293">9</text><text class="n" x="83" y="318">10</text><text class="n" x="83" y="343">11</text><text class="n" x="83" y="368">12</text><text class="n" x="83" y="393">13</text><text class="n" x="83" y="418">14</text><text class="n" x="83" y="443">15</text><text class="n" x="83" y="468">16</text><text class="n" x="83" y="493">17</text><text class="n" x="83" y="518">18</text><text class="n" x="83" y="543">19</text><text class="n" x="83" y="568">20</text><text class="n" x="83" y="593">21</text><text class="n" x="83" y="618">22</text><text class="n" x="83" y="643">23</text><text class="n" x="83" y="668">24</text>
<g clip-path="url(#ec1)">
<text class="c" x="105.5" y="193">&lt;<tspan class="m">html</tspan> <tspan class="r">xmlns</tspan>="<tspan class="u">http://www.w3.org/1999/xhtml</tspan>"&gt;</text>
<text class="c" x="105.5" y="218">&lt;<tspan class="m">head</tspan> <tspan class="r">runat</tspan>="server"&gt;</text>
<text class="c" x="153.5" y="243">&lt;<tspan class="m">title</tspan>&gt;&lt;/<tspan class="m">title</tspan>&gt;</text>
<text class="c" x="105.5" y="268">&lt;/<tspan class="m">head</tspan>&gt;</text>
<text class="c" x="105.5" y="293">&lt;<tspan class="m">body</tspan>&gt;</text>
<text class="c" x="153.5" y="318">&lt;<tspan class="m">form</tspan> <tspan class="r">id</tspan>="form1" <tspan class="r">runat</tspan>="server"&gt;</text>
<text class="c" x="153.5" y="343">&lt;<tspan class="m">div</tspan>&gt;</text>
<text class="c" x="177.5" y="368">&lt;<tspan class="m">asp</tspan>:<tspan class="m">TextBox</tspan> <tspan class="r">ID</tspan>="TextBox2"</text>
<text class="c" x="201.5" y="393"><tspan class="r">runat</tspan>="server" <tspan class="r">required</tspan>="required"</text>
<text class="c" x="201.5" y="418"><tspan class="r">autofocus</tspan>="autofocus"</text>
<text class="c" x="201.5" y="443"><tspan class="r">TextMode</tspan>="Email"&gt;&lt;/<tspan class="m">asp</tspan>:<tspan class="m">TextBox</tspan>&gt;</text>
<text class="c" x="177.5" y="493">&lt;<tspan class="m">asp</tspan>:<tspan class="m">TextBox</tspan> <tspan class="r">ID</tspan>="TextBox1"</text>
<text class="c" x="201.5" y="518"><tspan class="r">runat</tspan>="server" <tspan class="r">required</tspan>="required"</text>
<text class="c" x="201.5" y="543"><tspan class="r">TextMode</tspan>="Date"&gt;&lt;/<tspan class="m">asp</tspan>:<tspan class="m">TextBox</tspan>&gt;</text>
<text class="c" x="177.5" y="593">&lt;<tspan class="m">asp</tspan>:<tspan class="m">Button</tspan> <tspan class="r">ID</tspan>="Button1" <tspan class="r">runat</tspan>="server" <tspan class="r">Text</tspan>="Button"</text>
<text class="c" x="153.5" y="618">&lt;/<tspan class="m">div</tspan>&gt;</text>
<text class="c" x="153.5" y="643">&lt;/<tspan class="m">form</tspan>&gt;</text>
<text class="c" x="105.5" y="668">&lt;/<tspan class="m">body</tspan>&gt;</text>
<text class="c" x="105.5" y="693">&lt;/<tspan class="m">html</tspan>&gt;</text>
</g>
<path d="M212.5 326V348" stroke="#111" stroke-width="1.2"/>
<path d="M379 366H385M379 382H385M382 366V382" stroke="#333"/>
<rect x="750" y="214" width="9" height="220" fill="#d1d3d8"/><rect x="747" y="242" width="4.5" height="15" fill="#3fb862"/><rect x="747" y="282" width="4.5" height="128" fill="#3fb862"/><rect x="746" y="289.5" width="17" height="1.6" fill="#101070"/>
<use href="#dtab"/>
<text class="b" x="33" y="722" textLength="47" lengthAdjust="spacingAndGlyphs">Design</text><text class="b" x="113" y="722" textLength="31" lengthAdjust="spacingAndGlyphs">Split</text><text class="b" x="177" y="722" textLength="48" lengthAdjust="spacingAndGlyphs">Source</text>
<rect x="277.5" y="702.5" width="63" height="26" fill="#fff" stroke="#666"/><text class="b" x="283" y="721" textLength="53" lengthAdjust="spacingAndGlyphs">&lt;body&gt;</text>
<rect x="344.5" y="702.5" width="113" height="26" fill="#fff" stroke="#666"/><text class="b" x="349" y="721" textLength="104" lengthAdjust="spacingAndGlyphs">&lt;form#form1&gt;</text>
<rect x="461.5" y="702.5" width="49" height="26" fill="#fff" stroke="#666"/><text class="b" x="466" y="721" textLength="40" lengthAdjust="spacingAndGlyphs">&lt;div&gt;</text>
<rect x="514" y="702" width="179" height="27" fill="#f8f0b0"/><text class="b" x="520" y="721" textLength="169" lengthAdjust="spacingAndGlyphs">&lt;asp:TextBox#TextBox2&gt;</text>
<rect x="738.5" y="702.5" width="14" height="27" fill="#fff" stroke="#666"/><path d="M742 709V723L750 716Z" fill="#555"/>
<text class="w" x="775" y="142" textLength="118" lengthAdjust="spacingAndGlyphs">Solution Explorer</text>
<text class="g" x="776" y="198" textLength="205" lengthAdjust="spacingAndGlyphs" style="fill:#8f9297">Search Solution Explorer (Ctrl</text>
<g clip-path="url(#sl)"><text class="p" x="804" y="228" textLength="192" lengthAdjust="spacingAndGlyphs" style="font-size:16px">Solution 'WebApplication1' (</text>
<text class="p" x="822" y="251" textLength="130" lengthAdjust="spacingAndGlyphs" style="font-size:16px;font-weight:700">WebApplication1</text>
<text class="p" x="840" y="273" style="font-size:16px">Properties</text></g>
<text class="w" x="775" y="312" textLength="70" lengthAdjust="spacingAndGlyphs">Properties</text>
<text class="p" x="784" y="342" textLength="44" lengthAdjust="spacingAndGlyphs">&lt;DIV&gt;</text>
<rect x="786" y="378" width="106" height="24" fill="#f1f1f2"/>
<g clip-path="url(#nm)">
<text class="p" x="791" y="396">(id)</text><text class="p" x="791" y="421">accesskey</text><text class="p" x="791" y="446">aria-activedescendant</text><text class="p" x="791" y="471">aria-atomic</text><text class="p" x="791" y="496">aria-autocomplete</text><text class="p" x="791" y="521">aria-busy</text><text class="p" x="791" y="546">aria-checked</text><text class="p" x="791" y="571">aria-controls</text><text class="p" x="791" y="596">aria-describedby</text><text class="p" x="791" y="621">aria-disabled</text><text class="p" x="791" y="646">aria-dropeffect</text>
</g>
<text class="p" x="894" y="471">False</text><text class="p" x="894" y="496">none</text><text class="p" x="894" y="521">False</text><text class="p" x="894" y="546">undefined</text><text class="p" x="894" y="621">False</text><text class="p" x="894" y="646">none</text>
<text class="p" x="779" y="680" style="font-weight:700;font-size:16px">(id)</text>
<rect x="0" y="738" width="1024" height="29" fill="#0d78c4"/><rect x="0" y="767" width="1024" height="1" fill="#7f8b99"/>
<text class="st" x="5" y="759" fill="#cfe8f8" textLength="42" lengthAdjust="spacingAndGlyphs">Ready</text><text class="st" x="671" y="759" fill="#cfe8f8" textLength="38" lengthAdjust="spacingAndGlyphs">Ln 11</text><text class="st" x="762" y="759" fill="#cfe8f8" textLength="45" lengthAdjust="spacingAndGlyphs">Col 10</text><text class="st" x="854" y="759" fill="#cfe8f8" textLength="41" lengthAdjust="spacingAndGlyphs">Ch 10</text>
<use href="#swp"/>
<circle cx="971" cy="703" r="36" fill="#d8502c" opacity=".55"/><path d="M959 684L992 703L959 722Z" fill="#fff" stroke="#fff" stroke-width="2" stroke-linejoin="round"/>
<text class="pl" x="924" y="758" fill="#2d5a90" textLength="96" lengthAdjust="spacingAndGlyphs">pluralsight</text>
<text class="ns" x="995" y="757">NS</text>
<text class="ts" x="992" y="764">00:02:06</text>
</g>

<!-- FRAME 4 -->
<g transform="translate(0,2384)">
<rect width="1024" height="116" fill="#d6dbe8"/>
<use href="#vs" fill="#68217a"/>
<rect x="990" y="0" width="34" height="26" fill="#fdf7d8"/>
<use href="#chrome"/>
<text class="t" x="44" y="23" textLength="351" lengthAdjust="spacingAndGlyphs">WebApplication1 (Running) - Microsoft Visual Studio</text>
<text class="g" x="725" y="23" textLength="155" lengthAdjust="spacingAndGlyphs" style="fill:#808388">Quick Launch (Ctrl+Q)</text>
<text class="ps" x="1000" y="46">PS</text>
<text class="mn" x="12" y="50" textLength="27" lengthAdjust="spacingAndGlyphs">FILE</text><text class="mn" x="59" y="50" textLength="31" lengthAdjust="spacingAndGlyphs">EDIT</text><text class="mn" x="110" y="50" textLength="37" lengthAdjust="spacingAndGlyphs">VIEW</text><text class="mn" x="167" y="50" textLength="63" lengthAdjust="spacingAndGlyphs">PROJECT</text><text class="mn" x="250" y="50" textLength="43" lengthAdjust="spacingAndGlyphs">BUILD</text><text class="mn" x="313" y="50" textLength="50" lengthAdjust="spacingAndGlyphs">DEBUG</text><text class="mn" x="383" y="50" textLength="40" lengthAdjust="spacingAndGlyphs">TEAM</text><text class="mn" x="443" y="50" textLength="62" lengthAdjust="spacingAndGlyphs">FORMAT</text><text class="mn" x="525" y="50" textLength="49" lengthAdjust="spacingAndGlyphs">TOOLS</text><text class="mn" x="594" y="50" textLength="33" lengthAdjust="spacingAndGlyphs">TEST</text><text class="mn" x="647" y="50" textLength="66" lengthAdjust="spacingAndGlyphs">ANALYZE</text><text class="mn" x="733" y="50" textLength="69" lengthAdjust="spacingAndGlyphs">WINDOW</text>
<text class="mn" x="878" y="51" textLength="97" lengthAdjust="spacingAndGlyphs" style="fill:#2e3038;font-size:16px">Paul D. Sheriff</text>
<text class="mn" x="12" y="76" textLength="35" lengthAdjust="spacingAndGlyphs">HELP</text>
<path d="M961 32L963 32L964 41L966 39L971 40L973 42V50L968 56H963L956 46L958 44L961 46Z" fill="#fff" stroke="#222" stroke-width="1.1"/>
<use href="#tbl"/>
<use href="#doc" x="97" y="100" opacity=".3"/><use href="#crg" x="113" y="100"/>
<path d="M279 91L288 99.5L279 107Z" fill="#c3c8d1"/>
<text class="g" x="296" y="106" textLength="63" lengthAdjust="spacingAndGlyphs">Continue</text>
<use href="#crg" x="368" y="100"/><use href="#ref" x="386" y="100"/><use href="#cr" x="403" y="100"/>
<rect x="412.5" y="87.5" width="64" height="25" fill="none" stroke="#b8bdc6"/><text class="g" x="416" y="106" textLength="46" lengthAdjust="spacingAndGlyphs">Debug</text><use href="#crg" x="469" y="100"/>
<use href="#sp" x="483" y="88"/><use href="#doc" x="498" y="100" opacity=".3"/><use href="#sp" x="513" y="88"/>
<rect x="523" y="93" width="14" height="10" fill="#d9b26a"/><circle cx="526" cy="104" r="3" fill="none" stroke="#1f5a9a" stroke-width="1.4"/>
<use href="#dd" x="547" y="107"/><g transform="translate(554,88)"><use href="#gr"/></g>
<path d="M570 94V106M577 94V106" stroke="#1f5a9a" stroke-width="3.4"/><rect x="592" y="96" width="8" height="8" fill="#8c1c2c"/><use href="#ref" x="618" y="100"/><use href="#sp" x="632" y="88"/>
<use href="#doc" x="648" y="100" opacity=".3"/><use href="#sp" x="662" y="88"/>
<path d="M671 100H683M679 96L684 100L679 104" stroke="#c3c8d1" stroke-width="2" fill="none"/><path d="M695 96L700 102H707" stroke="#c3c8d1" stroke-width="2.4" fill="none"/><path d="M720 95C716 100 718 105 725 106" stroke="#c3c8d1" stroke-width="2.4" fill="none"/><path d="M740 105V99H749" stroke="#c3c8d1" stroke-width="2.4" fill="none"/>
<use href="#sp" x="758" y="88"/><path d="M768 95L780 105" stroke="#333" stroke-width="2"/><circle cx="776" cy="104" r="3.5" fill="none" stroke="#333" stroke-width="1.6"/><use href="#dd" x="792" y="107"/><g transform="translate(799,88)"><use href="#gr"/></g>
<use href="#doc" x="819" y="100"/><use href="#lns" x="841" y="100"/><use href="#lns" x="863" y="100"/><use href="#sp" x="877" y="88"/><path d="M886 91V94M890 91V94" stroke="#444"/><use href="#dd" x="889" y="107"/>
<use href="#dk2"/>
<text class="z" x="10" y="442" textLength="31" lengthAdjust="spacingAndGlyphs">100 %</text>
<rect x="6" y="124" width="174" height="23" fill="#3e5474"/>
<text class="w" x="11" y="143" textLength="99" lengthAdjust="spacingAndGlyphs">Default.aspx.cs</text>
<path d="M118 135H125V141H118ZM119.5 135V132H123.5V135" fill="none" stroke="#e6e8ee" stroke-width="1.2"/>
<rect x="180" y="122" width="143" height="25" fill="#f8f0a6"/>
<text class="t" x="185" y="143" textLength="83" lengthAdjust="spacingAndGlyphs">Default.aspx</text>
<path d="M283 136H290M286 132V139" stroke="#555" stroke-width="1.2"/><path d="M305 131L314 140M314 131L305 140" stroke="#666" stroke-width="1.6"/>
<rect x="87" y="224" width="4.5" height="25" fill="#27c04d"/><rect x="87" y="324" width="4.5" height="105" fill="#27c04d"/>
<path d="M99 187V429" stroke="#c4c4c4"/>
<use href="#fb" y="187"/><use href="#fb" y="212"/><use href="#fb" y="287"/><use href="#fb" y="312"/><use href="#fb" y="337"/><use href="#fb" y="362"/>
<text class="n" x="83" y="168">4</text><text class="n" x="83" y="193">5</text><text class="n" x="83" y="218">6</text><text class="n" x="83" y="243">7</text><text class="n" x="83" y="268">8</text><text class="n" x="83" y="293">9</text><text class="n" x="83" y="318">10</text><text class="n" x="83" y="343">11</text><text class="n" x="83" y="368">12</text><text class="n" x="83" y="393">13</text><text class="n" x="83" y="418">14</text>
<g clip-path="url(#ec2)">
<text class="c" x="105.5" y="193">&lt;<tspan class="m">html</tspan> <tspan class="r">xmlns</tspan>="<tspan class="u">http://www.w3.org/1999/xhtml</tspan>"&gt;</text>
<text class="c" x="105.5" y="218">&lt;<tspan class="m">head</tspan> <tspan class="r">runat</tspan>="server"&gt;</text>
<text class="c" x="153.5" y="243">&lt;<tspan class="m">title</tspan>&gt;&lt;/<tspan class="m">title</tspan>&gt;</text>
<text class="c" x="105.5" y="268">&lt;/<tspan class="m">head</tspan>&gt;</text>
<text class="c" x="105.5" y="293">&lt;<tspan class="m">body</tspan>&gt;</text>
<text class="c" x="153.5" y="318">&lt;<tspan class="m">form</tspan> <tspan class="r">id</tspan>="form1" <tspan class="r">runat</tspan>="server"&gt;</text>
<text class="c" x="153.5" y="343">&lt;<tspan class="m">div</tspan>&gt;</text>
<text class="c" x="177.5" y="368">&lt;<tspan class="m">asp</tspan>:<tspan class="m">TextBox</tspan> <tspan class="r">ID</tspan>="TextBox2"</text>
<text class="c" x="201.5" y="393"><tspan class="r">runat</tspan>="server" <tspan class="r">required</tspan>="required"</text>
<text class="c" x="201.5" y="418"><tspan class="r">placeholder</tspan>="Enter an email"</text>
</g>
<use href="#sb2"/>
<text class="w" x="0" y="0" transform="translate(997,123) rotate(90)" textLength="118" lengthAdjust="spacingAndGlyphs">Solution Explorer</text>
<g transform="translate(0,-255)"><use href="#dtab"/>
<text class="b" x="33" y="722" textLength="47" lengthAdjust="spacingAndGlyphs">Design</text><text class="b" x="113" y="722" textLength="31" lengthAdjust="spacingAndGlyphs">Split</text><text class="b" x="177" y="722" textLength="48" lengthAdjust="spacingAndGlyphs">Source</text>
<rect x="277.5" y="702.5" width="59" height="26" fill="#fff" stroke="#666"/><text class="b" x="283" y="721" textLength="50" lengthAdjust="spacingAndGlyphs">&lt;html&gt;</text>
<rect x="340.5" y="702.5" width="63" height="26" fill="#fff" stroke="#666"/><text class="b" x="346" y="721" textLength="53" lengthAdjust="spacingAndGlyphs">&lt;body&gt;</text>
<rect x="407.5" y="702.5" width="113" height="26" fill="#fff" stroke="#666"/><text class="b" x="412" y="721" textLength="104" lengthAdjust="spacingAndGlyphs">&lt;form#form1&gt;</text>
<rect x="524.5" y="702.5" width="49" height="26" fill="#fff" stroke="#666"/><text class="b" x="529" y="721" textLength="40" lengthAdjust="spacingAndGlyphs">&lt;div&gt;</text>
<rect x="578" y="702" width="179" height="27" fill="#f8f0b0"/><text class="b" x="583" y="721" textLength="169" lengthAdjust="spacingAndGlyphs">&lt;asp:TextBox#TextBox1&gt;</text>
<rect x="963.5" y="702.5" width="14" height="27" fill="#fff" stroke="#666"/><path d="M967 709V723L975 716Z" fill="#555"/>
</g>
<text class="w" x="11" y="504" textLength="67" lengthAdjust="spacingAndGlyphs">Call Stack</text>
<text class="p" x="30" y="530" style="fill:#b8b8bc" textLength="41" lengthAdjust="spacingAndGlyphs">Name</text><text class="p" x="947" y="530" style="fill:#b8b8bc" textLength="23" lengthAdjust="spacingAndGlyphs">Lan</text>
<rect x="0" y="739" width="1024" height="29" fill="#c24e05"/>
<text class="st" x="5" y="759" fill="#f9dcbc" textLength="42" lengthAdjust="spacingAndGlyphs">Ready</text><text class="st" x="670" y="759" fill="#f9dcbc" textLength="38" lengthAdjust="spacingAndGlyphs">Ln 20</text><text class="st" x="761" y="759" fill="#f9dcbc" textLength="45" lengthAdjust="spacingAndGlyphs">Col 34</text><text class="st" x="854" y="759" fill="#f9dcbc" textLength="41" lengthAdjust="spacingAndGlyphs">Ch 34</text>
<use href="#swp"/>
<circle cx="971" cy="703" r="36" fill="#d8502c" opacity=".55"/><path d="M959 684L992 703L959 722Z" fill="#fff" stroke="#fff" stroke-width="2" stroke-linejoin="round"/>
<text class="pl" x="924" y="758" fill="#7c3a1c" textLength="96" lengthAdjust="spacingAndGlyphs">pluralsight</text>
<text class="ns" x="995" y="757">NS</text>
<text class="ts" x="992" y="764">00:03:09</text>
</g>
</svg>
</body></html>
